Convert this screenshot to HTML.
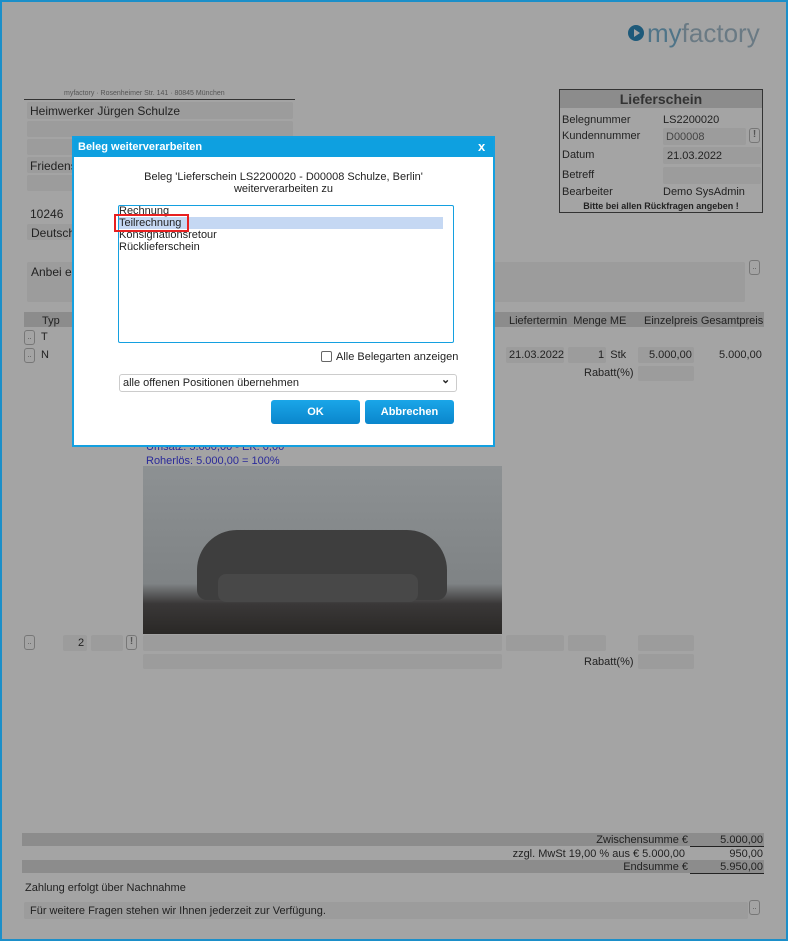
<!DOCTYPE html>
<html><head><meta charset="utf-8"><style>
*{box-sizing:border-box;margin:0;padding:0}
body{width:788px;height:941px;overflow:hidden;background:#a4a4a4;font-family:"Liberation Sans",sans-serif;font-size:11px;color:#222;position:relative}
.a{position:absolute;white-space:nowrap}
.f{position:absolute;background:#9c9c9c;border-radius:2px}
.bar{position:absolute;background:#8c8c8c}
.btn{position:absolute;width:11px;height:15px;border:1px solid #777;border-radius:3px;font-size:8px;text-align:center;line-height:12px;color:#555}
.r{text-align:right}
</style></head><body>
<div class="a" style="left:0;top:0;width:788px;height:941px;border:2px solid #1b8fc9"></div>
<!-- logo -->
<div class="a" style="left:628px;top:25px;width:16px;height:16px;border-radius:50%;background:#1e5a7a"></div>
<div class="a" style="left:634px;top:29px;width:0;height:0;border-left:6px solid #a4a4a4;border-top:4px solid transparent;border-bottom:4px solid transparent"></div>
<div class="a" style="left:647px;top:18px;font-size:26px;color:#4f7488">my<span style="color:#6a7a84">factory</span></div>

<div class="a" style="left:64px;top:90px;font-size:7px;color:#555">myfactory · Rosenheimer Str. 141 · 80845 München</div>
<div class="a" style="left:24px;top:99px;width:271px;border-top:1px solid #333"></div>
<div class="f" style="left:27px;top:102px;width:266px;height:17px"></div>
<div class="a" style="left:30px;top:104px;font-size:12px">Heimwerker Jürgen Schulze</div>
<div class="f" style="left:27px;top:121px;width:266px;height:16px"></div>
<div class="f" style="left:27px;top:139px;width:266px;height:16px"></div>
<div class="f" style="left:27px;top:157px;width:50px;height:16px"></div>
<div class="a" style="left:30px;top:159px;font-size:12px">Friedens</div>
<div class="f" style="left:27px;top:175px;width:50px;height:16px"></div>
<div class="a" style="left:30px;top:207px;font-size:12px">10246</div>
<div class="f" style="left:27px;top:224px;width:50px;height:16px"></div>
<div class="a" style="left:31px;top:226px;font-size:12px">Deutsch</div>

<!-- Lieferschein box -->
<div class="a" style="left:559px;top:89px;width:204px;height:124px;border:1px solid #333"></div>
<div class="bar" style="left:560px;top:90px;width:202px;height:18px"></div>
<div class="a" style="left:560px;top:91px;width:202px;text-align:center;font-size:14px;font-weight:bold;color:#333">Lieferschein</div>
<div class="a" style="left:562px;top:114px;font-size:11px">Belegnummer</div><div class="a" style="left:663px;top:114px">LS2200020</div>
<div class="a" style="left:562px;top:130px">Kundennummer</div><div class="f" style="left:663px;top:128px;width:83px;height:17px"></div><div class="a" style="left:666px;top:131px;color:#444">D00008</div>
<div class="btn" style="left:749px;top:128px;font-weight:bold;font-size:10px">!</div>
<div class="a" style="left:562px;top:149px">Datum</div><div class="f" style="left:663px;top:147px;width:98px;height:17px"></div><div class="a" style="left:667px;top:150px">21.03.2022</div>
<div class="a" style="left:562px;top:169px">Betreff</div><div class="f" style="left:663px;top:167px;width:98px;height:17px"></div>
<div class="a" style="left:562px;top:186px">Bearbeiter</div><div class="a" style="left:663px;top:186px">Demo SysAdmin</div>
<div class="a" style="left:560px;top:201px;width:202px;text-align:center;font-size:9px;font-weight:bold">Bitte bei allen Rückfragen angeben !</div>

<div class="f" style="left:27px;top:262px;width:718px;height:40px"></div>
<div class="a" style="left:31px;top:265px;font-size:12px">Anbei er</div>
<div class="btn" style="left:749px;top:260px">..</div>

<div class="bar" style="left:24px;top:312px;width:740px;height:15px"></div>
<div class="a" style="left:42px;top:315px">Typ</div>
<div class="a" style="left:509px;top:315px">Liefertermin &nbsp;Menge ME</div>
<div class="a" style="left:644px;top:315px">Einzelpreis Gesamtpreis</div>
<div class="btn" style="left:24px;top:330px">..</div><div class="a" style="left:41px;top:331px">T</div>
<div class="btn" style="left:24px;top:348px">..</div><div class="a" style="left:41px;top:349px">N</div>
<div class="f" style="left:506px;top:347px;width:58px;height:16px"></div><div class="a" style="left:509px;top:349px">21.03.2022</div>
<div class="f" style="left:568px;top:347px;width:38px;height:16px"></div><div class="a" style="left:598px;top:349px">1 &nbsp;Stk</div>
<div class="f" style="left:638px;top:347px;width:56px;height:16px"></div><div class="a" style="left:649px;top:349px">5.000,00</div>
<div class="a" style="left:719px;top:349px">5.000,00</div>
<div class="a" style="left:584px;top:367px">Rabatt(%)</div><div class="f" style="left:638px;top:366px;width:56px;height:15px"></div>
<div class="a" style="left:146px;top:441px;color:#2a2a9a">Umsatz: 5.000,00 - EK: 0,00</div>
<div class="a" style="left:146px;top:455px;color:#2a2a9a">Roherlös: 5.000,00 = 100%</div>
<!-- image -->
<div class="a" style="left:143px;top:466px;width:359px;height:168px;background:linear-gradient(#8d9193,#7f8385 70%,#3a3838 82%,#2a2826)"></div>
<div class="a" style="left:197px;top:530px;width:250px;height:70px;background:#3e3e3e;border-radius:40px 40px 10px 10px"></div>
<div class="a" style="left:218px;top:574px;width:200px;height:28px;background:#484848;border-radius:8px"></div>

<div class="btn" style="left:24px;top:635px">..</div>
<div class="f" style="left:63px;top:635px;width:24px;height:16px"></div><div class="a" style="left:78px;top:637px">2</div>
<div class="f" style="left:91px;top:635px;width:32px;height:16px"></div>
<div class="btn" style="left:126px;top:635px;font-weight:bold;font-size:10px">!</div>
<div class="f" style="left:143px;top:635px;width:359px;height:16px"></div>
<div class="f" style="left:506px;top:635px;width:58px;height:16px"></div>
<div class="f" style="left:568px;top:635px;width:38px;height:16px"></div>
<div class="f" style="left:638px;top:635px;width:56px;height:16px"></div>
<div class="f" style="left:143px;top:654px;width:359px;height:15px"></div>
<div class="a" style="left:584px;top:656px">Rabatt(%)</div><div class="f" style="left:638px;top:654px;width:56px;height:15px"></div>

<!-- totals -->
<div class="bar" style="left:22px;top:833px;width:742px;height:13px"></div>
<div class="a r" style="left:400px;top:834px;width:288px">Zwischensumme €</div>
<div class="a r" style="left:690px;top:834px;width:73px">5.000,00</div>
<div class="a" style="left:690px;top:846px;width:74px;border-top:1px solid #222"></div>
<div class="a r" style="left:400px;top:848px;width:285px">zzgl. MwSt 19,00 % aus € 5.000,00</div>
<div class="a r" style="left:690px;top:848px;width:73px">950,00</div>
<div class="bar" style="left:22px;top:860px;width:742px;height:13px"></div>
<div class="a r" style="left:400px;top:861px;width:288px">Endsumme €</div>
<div class="a r" style="left:690px;top:861px;width:73px">5.950,00</div>
<div class="a" style="left:690px;top:873px;width:74px;border-top:1px solid #222"></div>
<div class="a" style="left:25px;top:882px">Zahlung erfolgt über Nachnahme</div>
<div class="f" style="left:24px;top:902px;width:724px;height:17px"></div>
<div class="a" style="left:30px;top:905px">Für weitere Fragen stehen wir Ihnen jederzeit zur Verfügung.</div>
<div class="btn" style="left:749px;top:900px">..</div>

<!-- dialog -->
<div class="a" style="left:72px;top:136px;width:423px;height:311px;background:#fff;border:2px solid #14a0e0"></div>
<div class="a" style="left:74px;top:138px;width:419px;height:19px;background:#0ea0e0"></div>
<div class="a" style="left:78px;top:141px;color:#fff;font-weight:bold;font-size:11px">Beleg weiterverarbeiten</div>
<div class="a" style="left:478px;top:139px;color:#fff;font-weight:bold;font-size:13px">x</div>
<div class="a" style="left:74px;top:171px;width:419px;text-align:center;line-height:12px;font-size:11px">Beleg 'Lieferschein LS2200020 - D00008 Schulze, Berlin'<br>weiterverarbeiten zu</div>
<div class="a" style="left:118px;top:205px;width:336px;height:138px;border:1px solid #14a0e0;border-radius:2px"></div>
<div class="a" style="left:119px;top:217px;width:324px;height:12px;background:#c5d8f3"></div>
<div class="a" style="left:119px;top:205px;line-height:12px;font-size:11px">Rechnung<br>Teilrechnung<br>Konsignationsretour<br>Rücklieferschein</div>
<div class="a" style="left:114px;top:214px;width:75px;height:18px;border:2px solid #e82020"></div>
<div class="a" style="left:321px;top:351px;width:11px;height:11px;border:1px solid #666;border-radius:2px"></div>
<div class="a" style="left:336px;top:351px">Alle Belegarten anzeigen</div>
<div class="a" style="left:119px;top:374px;width:338px;height:18px;border:1px solid #ccc;border-radius:3px"></div>
<div class="a" style="left:123px;top:377px">alle offenen Positionen übernehmen</div>
<div class="a" style="left:441px;top:373px;font-weight:bold;font-size:11px">⌄</div>
<div class="a" style="left:271px;top:400px;width:89px;height:24px;background:linear-gradient(#1aa6e8,#0a86cc);border-radius:3px;color:#fff;font-weight:bold;text-align:center;line-height:24px">OK</div>
<div class="a" style="left:365px;top:400px;width:89px;height:24px;background:linear-gradient(#1aa6e8,#0a86cc);border-radius:3px;color:#fff;font-weight:bold;text-align:center;line-height:24px">Abbrechen</div>
</body></html>
